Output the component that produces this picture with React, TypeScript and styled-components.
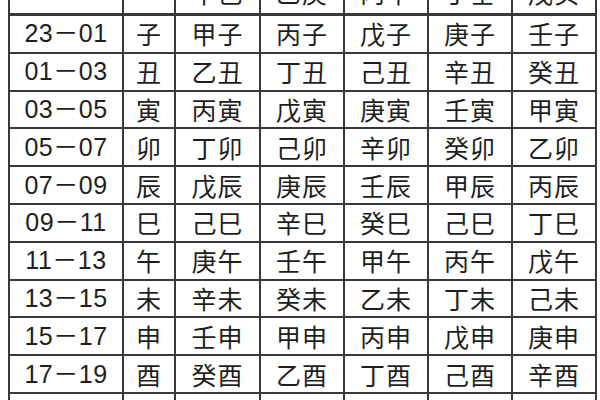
import React from "react";
import styled, {createGlobalStyle} from "styled-components";

const STEMS = ["甲", "乙", "丙", "丁", "戊", "己", "庚", "辛", "壬", "癸"];
const BRANCHES = ["子", "丑", "寅", "卯", "辰", "巳", "午", "未", "申", "酉", "戌"];
const HEADS = ["甲己", "乙庚", "丙辛", "丁壬", "戊癸"];

// the source table has this cell printed as 己巳
const OVERRIDES: Record<string, string> = {"5-3": "己巳"};

const pad = (n: number) => String(n % 24).padStart(2, "0");

const GlobalStyle = createGlobalStyle`
  html, body {
    margin: 0;
    padding: 0;
    background: #ffffff;
    overflow: hidden;
  }
`;

const Page = styled.div`
  width: 600px;
  height: 400px;
  overflow: hidden;
  padding-left: 8px;
  box-sizing: border-box;
`;

const Grid = styled.div`
  display: inline-grid;
  grid-template-columns: 112px 50px 83px 82px 82px 82px 82px;
  grid-template-rows: 35px;
  grid-auto-rows: 35.8px;
  gap: 2px;
  padding: 0 2px 2px 2px;
  margin-top: -26px;
  background: #383838;
`;

const Cell = styled.div<{$time?: boolean; $head?: boolean}>`
  background: #ffffff;
  display: flex;
  align-items: center;
  justify-content: center;
  color: #1e1e1e;
  font-family: ${p =>
    p.$time
      ? `"Liberation Sans", "Noto Sans CJK SC", sans-serif`
      : `"Noto Sans CJK SC", sans-serif`};
  font-size: 25px;
  letter-spacing: ${p => (p.$time ? "0.5px" : "1px")};
  line-height: 1;
  padding-bottom: ${p => (p.$head ? "8px" : "0")};
  border-bottom: ${p => (p.$head ? "1px solid #383838" : "none")};
  box-sizing: border-box;
`;

const App = () => {
  const rows = BRANCHES.map((branch, i) => {
    const start = i === 0 ? 23 : i * 2 - 1;
    const end = i * 2 + 1;
    return {
      time: `${pad(start)}－${pad(end)}`,
      branch,
      pillars: HEADS.map((_, j) => OVERRIDES[`${i}-${j}`] ?? STEMS[(2 * j + i) % 10] + branch),
    };
  });

  return (
    <>
      <GlobalStyle />
      <Page>
        <Grid>
          <Cell $time $head />
          <Cell $head />
          {HEADS.map(h => (
            <Cell key={h} $head>
              {h}
            </Cell>
          ))}
          {rows.map(r => (
            <React.Fragment key={r.branch}>
              <Cell $time>{r.time}</Cell>
              <Cell>{r.branch}</Cell>
              {r.pillars.map((p, j) => (
                <Cell key={j}>{p}</Cell>
              ))}
            </React.Fragment>
          ))}
        </Grid>
      </Page>
    </>
  );
};

export default App;
